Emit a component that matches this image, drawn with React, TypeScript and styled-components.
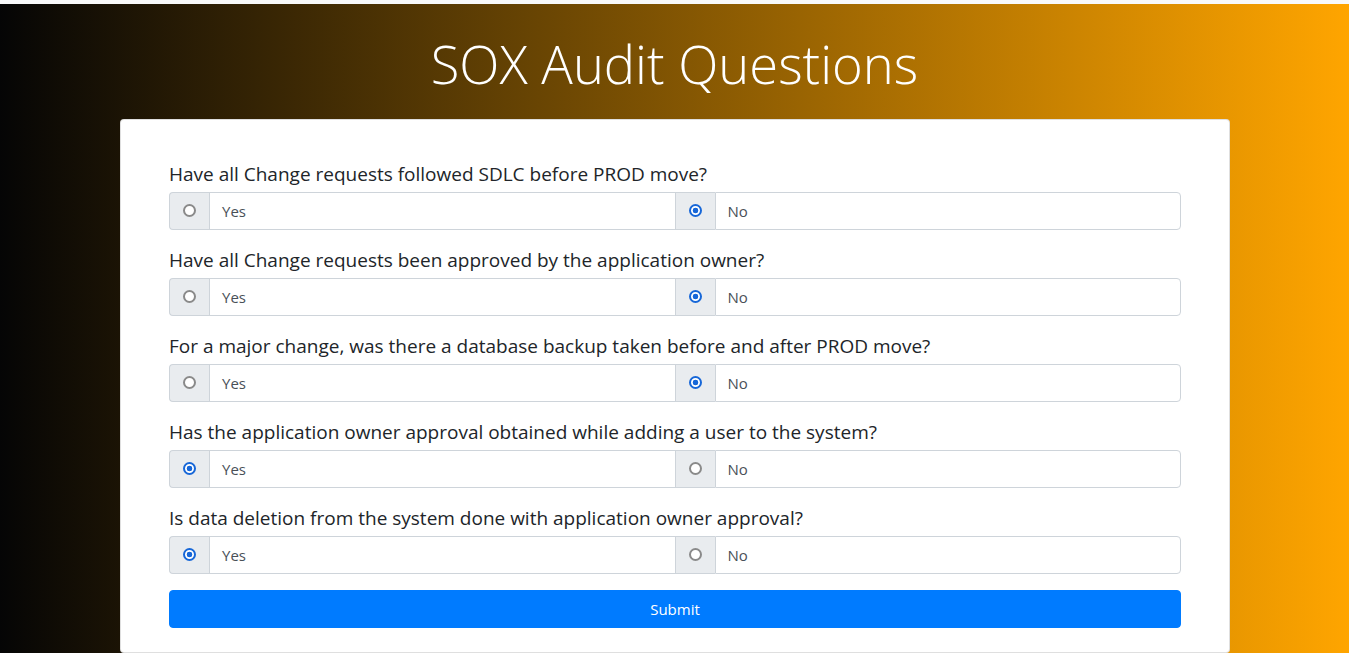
import React from "react";
import styled, { createGlobalStyle } from "styled-components";

const Global = createGlobalStyle`
  html, body { margin: 0; padding: 0; }
  body {
    font-family: "Open Sans", "Noto Sans", "Liberation Sans", sans-serif;
    background: #f8f9fa;
    overflow: hidden;
  }
  * { box-sizing: border-box; }
`;

const Page = styled.div`
  margin-top: 4px;
  height: 649px;
  background: linear-gradient(to right, #050505, #ffa500);
  display: flex;
  flex-direction: column;
  align-items: center;
`;

const Title = styled.h1`
  margin: 26px 0 22px;
  font-family: "Open Sans", "Noto Sans", sans-serif;
  font-weight: 300;
  font-size: 52.5px;
  line-height: 67px;
  color: #fff;
`;

const Card = styled.form`
  width: 1110px;
  margin-left: 1px;
  background: #fff;
  border: 1px solid rgba(0, 0, 0, 0.125);
  border-radius: 4px;
  padding: 39px 48px 24px 48px;
  display: flex;
  flex-direction: column;
`;

const Group = styled.div`
  margin-bottom: 15px;
`;

const Question = styled.div`
  font-size: 19px;
  line-height: 30px;
  color: #212529;
  margin-bottom: 3px;
`;

const InputGroup = styled.div`
  display: flex;
  height: 38px;
`;

const Addon = styled.label<{ $first?: boolean }>`
  width: 40px;
  flex: none;
  display: flex;
  align-items: center;
  justify-content: center;
  background: #e9ecef;
  border: 1px solid #ced4da;
  border-right: none;
  margin-left: ${(p) => (p.$first ? "0" : "-1px")};
  border-radius: ${(p) => (p.$first ? "4px 0 0 4px" : "0")};
`;

const Radio = styled.input`
  appearance: none;
  -webkit-appearance: none;
  margin: 0 0 1px 0;
  width: 13px;
  height: 13px;
  border-radius: 50%;
  border: 2px solid #8a8a8a;
  background: #fff;
  &:checked {
    border-color: #1767d8;
    background: radial-gradient(circle, #1767d8 0 2.6px, #fff 3.1px);
  }
`;

const Field = styled.div<{ $last?: boolean }>`
  flex: 1;
  display: flex;
  align-items: center;
  padding: 0 12px;
  border: 1px solid #ced4da;
  font-size: 15px;
  color: #495057;
  background: #fff;
  border-radius: ${(p) => (p.$last ? "0 4px 4px 0" : "0")};
`;

const Submit = styled.button`
  margin-top: 1px;
  height: 38px;
  width: 100%;
  background: #007bff;
  border: 1px solid #007bff;
  border-radius: 4px;
  color: #fff;
  font-family: "Open Sans", "Noto Sans", sans-serif;
  font-size: 15px;
`;

const questions: { q: string; yes: boolean }[] = [
  { q: "Have all Change requests followed SDLC before PROD move?", yes: false },
  { q: "Have all Change requests been approved by the application owner?", yes: false },
  { q: "For a major change, was there a database backup taken before and after PROD move?", yes: false },
  { q: "Has the application owner approval obtained while adding a user to the system?", yes: true },
  { q: "Is data deletion from the system done with application owner approval?", yes: true },
];

export default function App() {
  return (
    <>
      <Global />
      <Page>
        <Title>SOX Audit Questions</Title>
        <Card onSubmit={(e) => e.preventDefault()}>
          {questions.map((item, i) => (
            <Group key={i}>
              <Question>{item.q}</Question>
              <InputGroup>
                <Addon $first>
                  <Radio type="radio" name={`q${i}`} defaultChecked={item.yes} />
                </Addon>
                <Field>Yes</Field>
                <Addon>
                  <Radio type="radio" name={`q${i}`} defaultChecked={!item.yes} />
                </Addon>
                <Field $last>No</Field>
              </InputGroup>
            </Group>
          ))}
          <Submit type="submit">Submit</Submit>
        </Card>
      </Page>
    </>
  );
}
